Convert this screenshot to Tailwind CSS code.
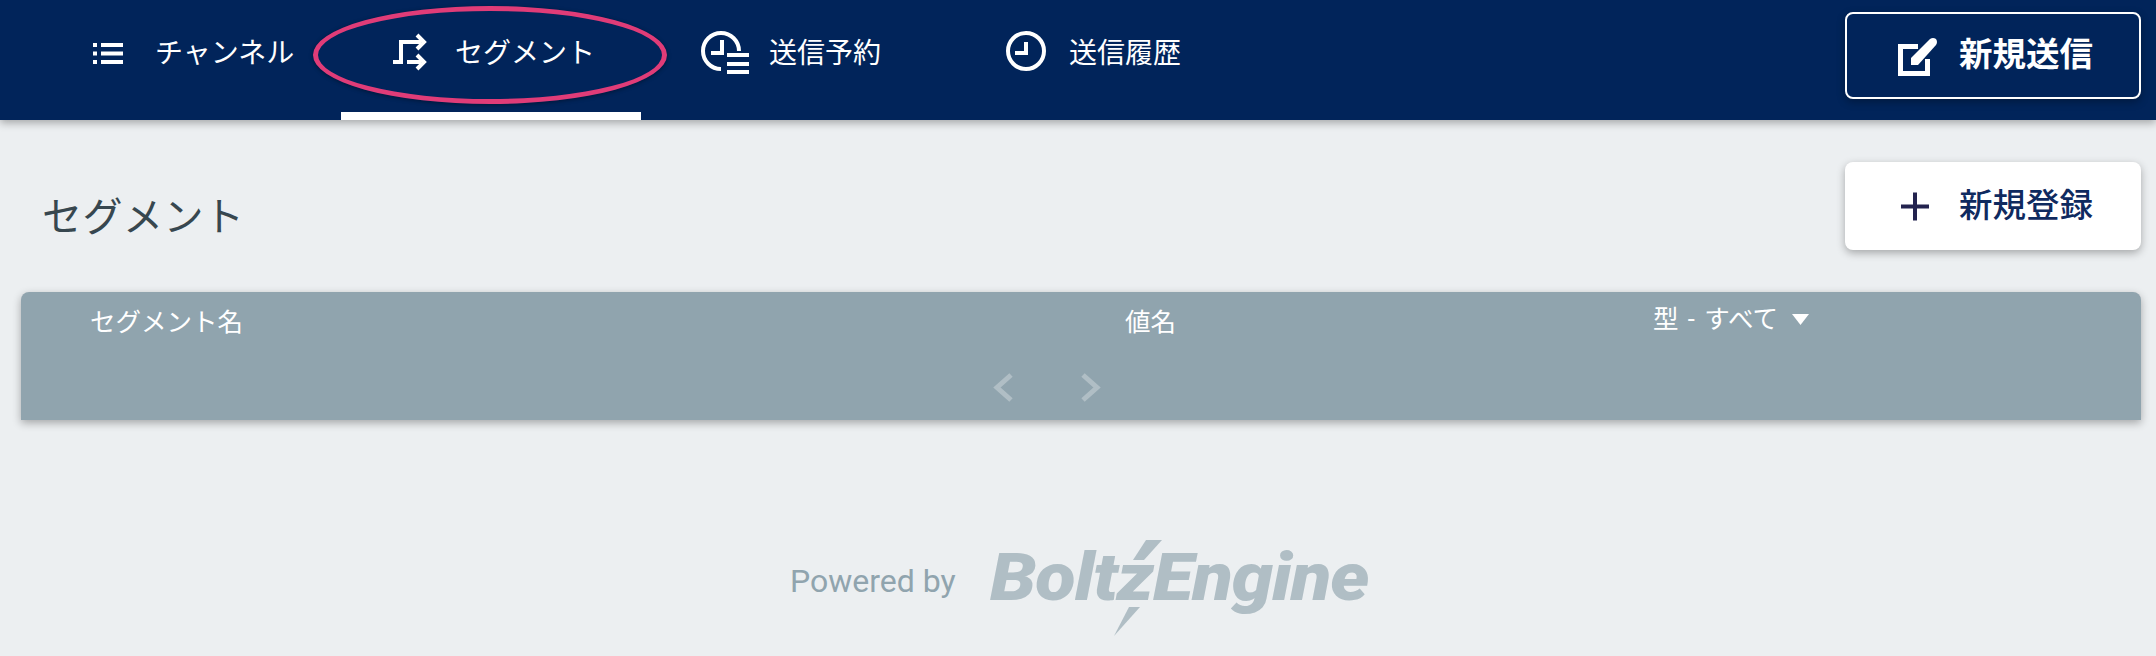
<!DOCTYPE html>
<html lang="ja">
<head>
  <meta charset="UTF-8" />
  <title>セグメント</title>
  <script src="https://cdn.jsdelivr.net/npm/@tailwindcss/browser@4"></script>
</head>
<body class="bg-[#eceff1] font-['Roboto','Noto_Sans_CJK_JP',sans-serif] h-[656px] overflow-hidden">

  <!-- Navbar -->
  <header class="relative z-10 h-[120px] bg-[#01245a] text-white shadow-[0_3px_8px_rgba(0,0,0,0.3)] flex justify-between pl-[41px] pr-[15px]">
    <nav class="flex h-full text-[28px]">
      <a class="w-[300px] h-full flex items-center pl-[44px] gap-[22px] pb-[12px]">
        <svg class="w-[48px] h-[48px]" viewBox="0 0 48 48" fill="#fff">
          <rect x="8" y="13" width="4" height="4"/><rect x="8" y="21.500" width="4" height="4"/><rect x="8" y="30" width="4" height="4"/>
          <rect x="16" y="13" width="22" height="4"/><rect x="16" y="21.500" width="22" height="4"/><rect x="16" y="30" width="22" height="4"/>
        </svg>
        <span>チャンネル</span>
      </a>
      <a class="w-[300px] h-full flex items-center pl-[44px] gap-[22px] pb-[4px] border-b-8 border-white">
        <svg class="w-[48px] h-[48px]" viewBox="0 0 48 48" fill="none" stroke="#fff" stroke-width="4">
          <path d="M8 32H16V12H36M22 32H36"/>
          <path d="M32 5l7 7-7 7M32 25l7 7-7 7"/>
        </svg>
        <span>セグメント</span>
      </a>
      <a class="w-[300px] h-full flex items-center ml-[14px] pl-[46px] gap-[20px] pb-[12px]">
        <svg class="w-[48px] h-[48px]" viewBox="0 0 48 48" fill="none" stroke="#fff" stroke-width="4">
          <path d="M38 21A18 18 0 1 0 20 39"/>
          <path d="M21 10V23H10"/>
          <path d="M26 25h22M26 34h22M26 42h22"/>
        </svg>
        <span>送信予約</span>
      </a>
      <a class="w-[300px] h-full flex items-center pl-[46px] gap-[20px] pb-[12px]">
        <svg class="w-[48px] h-[48px]" viewBox="0 0 48 48" fill="none" stroke="#fff" stroke-width="4">
          <circle cx="25" cy="21" r="18"/>
          <path d="M25 12V23H14"/>
        </svg>
        <span>送信履歴</span>
      </a>
    </nav>
    <button class="mt-[12px] w-[296px] h-[87px] rounded-lg border-2 border-white bg-[#01245a] shadow-[0_3px_8px_rgba(0,0,0,0.3)] flex items-center pl-[49px] gap-[21px] text-[33.500px] font-bold">
      <svg class="w-[42px] h-[42px] shrink-0" viewBox="0 0 42 42">
        <path d="M22 11.500H4.500V38.500H31.500V24" fill="none" stroke="#fff" stroke-width="5"/>
        <path d="M15 30V23L34 4Q37 2 40 4Q42 7 40 10L22 30z" fill="#fff"/>
      </svg>
      <span>新規送信</span>
    </button>
  </header>

  <main class="pl-[15px] pr-[15px]">
    <!-- Title row -->
    <div class="flex justify-between h-[172px] pl-[27px]">
      <h1 class="mt-[73px] text-[40px] leading-[50px] text-[#37474f] tracking-[0.5px]">セグメント</h1>
      <button class="mt-[42px] w-[296px] h-[88px] rounded-lg bg-white shadow-[0_3px_8px_rgba(0,0,0,0.3)] flex items-center pl-[52px] gap-[25px] text-[33.500px] text-[#0f2a5f]">
        <svg class="w-[37px] h-[37px] shrink-0" viewBox="0 0 37 37" fill="none" stroke="#23234f" stroke-width="4">
          <path d="M4 18.500h28M18 4.500v28"/>
        </svg>
        <span class="font-medium">新規登録</span>
      </button>
    </div>

    <!-- Table -->
    <section class="ml-[6px] h-[128px] bg-[#90a4ae] rounded-t-lg shadow-[0_3px_8px_rgba(0,0,0,0.3)] text-white text-[25.500px]">
      <div class="grid grid-cols-[1104px_528px_1fr] h-[60px] items-center">
        <span class="pl-[69px]">セグメント名</span>
        <span>値名</span>
        <span class="flex items-center gap-[14px] -mt-[6px]"><span class="[word-spacing:3px]">型 - すべて</span>
          <svg class="w-[17px] h-[11px]" viewBox="0 0 17 11" fill="#fff"><path d="M0 0h17l-8.500 11z"/></svg>
        </span>
      </div>
      <div class="flex gap-[68px] ml-[972px] mt-[21px]">
        <svg class="w-[20px] h-[29px]" viewBox="0 0 20 29" fill="none" stroke="#b0bec5" stroke-width="5"><path d="M18 2L4 14.500 18 27"/></svg>
        <svg class="w-[20px] h-[29px]" viewBox="0 0 20 29" fill="none" stroke="#b0bec5" stroke-width="5"><path d="M2 2l14 12.500L2 27"/></svg>
      </div>
    </section>

    <!-- Footer -->
    <footer class="flex items-center ml-[775px] mt-[108px] h-[100px]">
      <span class="text-[32px] text-[#90a4ae] w-[200px] mt-[6px]">Powered by</span>
      <div class="relative w-[382px] text-[#b0bec5]">
        <span class="block origin-left scale-x-[1.125] font-['Roboto',sans-serif] text-[66px] leading-none font-black italic tracking-[-1px] whitespace-nowrap">BoltzEngine</span>
        <svg class="absolute left-0 top-0 w-[382px] h-[100px] overflow-visible" viewBox="0 0 382 100" fill="#b0bec5">
          <path d="M143 15L156 -5H172L154 15z"/>
          <path d="M139 62H150L124 91z"/>
        </svg>
      </div>
    </footer>
  </main>

  <!-- Annotation ring -->
  <div class="absolute z-20 left-[313px] top-[6px] w-[354px] h-[98px] rounded-[50%] border-[5px] border-[#e03c78] shadow-[0_1px_4px_rgba(0,0,0,0.4)]"></div>
</body>
</html>
